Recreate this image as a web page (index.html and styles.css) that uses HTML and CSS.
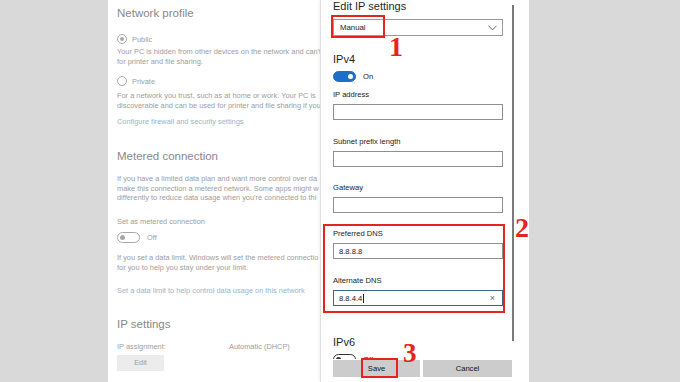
FILE: index.html
```html
<!DOCTYPE html>
<html>
<head>
<meta charset="utf-8">
<link rel="stylesheet" href="styles.css">
</head>
<body>
<div class="page">
  <div class="gutter"></div>
  <main class="panel">
    <section class="settings">
      <h2 class="heading h-network">Network profile</h2>
      <div class="radio-row r-public"><span class="radio checked"></span><span>Public</span></div>
      <p class="para p-public">Your PC is hidden from other devices on the network and can't<br>for printer and file sharing.</p>
      <div class="radio-row r-private"><span class="radio"></span><span>Private</span></div>
      <p class="para p-private">For a network you trust, such as at home or work. Your PC is<br>discoverable and can be used for printer and file sharing if you</p>
      <a class="link l-firewall">Configure firewall and security settings</a>

      <h2 class="heading h-metered">Metered connection</h2>
      <p class="para dense p-metered">If you have a limited data plan and want more control over da<br>make this connection a metered network. Some apps might w<br>differently to reduce data usage when you're connected to thi</p>
      <p class="para p-setas">Set as metered connection</p>
      <div class="toggle-row t-metered"><span class="toggle off"><span class="knob"></span></span><span>Off</span></div>
      <p class="para p-limit">If you set a data limit, Windows will set the metered connectio<br>for you to help you stay under your limit.</p>
      <a class="link l-limit">Set a data limit to help control data usage on this network</a>

      <h2 class="heading h-ip">IP settings</h2>
      <div class="assign-row"><span class="assign-label">IP assignment:</span><span>Automatic (DHCP)</span></div>
      <div class="edit-btn">Edit</div>
    </section>

    <div class="dialog">
      <h1 class="d-title">Edit IP settings</h1>
      <div class="select"><span>Manual</span>
        <svg class="chev" width="9" height="6" viewBox="0 0 9 6"><path d="M0.5 0.8 L4.5 4.8 L8.5 0.8" fill="none" stroke="#555" stroke-width="0.9"/></svg>
      </div>
      <h2 class="d-sub ipv4">IPv4</h2>
      <div class="toggle-row d-toggle"><span class="toggle on"><span class="knob"></span></span><span>On</span></div>
      <label class="d-label l-ip">IP address</label>
      <div class="input"></div>
      <label class="d-label l-subnet">Subnet prefix length</label>
      <div class="input"></div>
      <label class="d-label l-gw">Gateway</label>
      <div class="input"></div>
      <label class="d-label l-pref">Preferred DNS</label>
      <div class="input"><span>8.8.8.8</span></div>
      <label class="d-label l-alt">Alternate DNS</label>
      <div class="input focus"><span>8.8.4.4</span><span class="caret"></span><span class="clear">×</span></div>
      <h2 class="d-sub ipv6">IPv6</h2>
      <div class="toggle-row d-toggle6"><span class="toggle off dark"><span class="knob"></span></span><span class="off6">Off</span></div>
      <div class="scrollbar"></div>
      <div class="footer">
        <div class="btn save">Save</div>
        <div class="btn cancel">Cancel</div>
      </div>
    </div>
  </main>
  <div class="gutter right"></div>
</div>

<div class="mark box1"></div>
<div class="num n1">1</div>
<div class="mark box2"></div>
<div class="num n2">2</div>
<div class="mark box3"></div>
<div class="num n3">3</div>
</body>
</html>
```

FILE: styles.css
```css
* { box-sizing: border-box; margin: 0; padding: 0; }
html, body { width: 680px; height: 382px; overflow: hidden; }
body {
  background: #d9d9d9;
  font-family: "Liberation Sans", Arial, sans-serif;
  position: relative;
}
.page { display: flex; height: 382px; }
.gutter { width: 108px; flex: none; background: #d9d9d9; }
.gutter.right { flex: 1; }
.panel {
  width: 421px; flex: none; background: #fff; position: relative; overflow: hidden;
}

/* ---------- faded settings page ---------- */
.settings {
  padding: 5px 0 0 9px;
  white-space: nowrap;
  color: #9d9d9d;
  font-size: 7.4px;
}
.heading {
  font-weight: normal;
  font-size: 11.5px;
  line-height: 16px;
  color: #888;
}
.para { line-height: 10px; }
.para.dense { line-height: 9.5px; }
.link { display: block; line-height: 10px; color: #95b5cd; }
.radio-row, .toggle-row { display: flex; align-items: center; height: 12px; gap: 5px; }
.radio {
  width: 10px; height: 10px; border-radius: 50%; border: 1px solid #a8a8a8;
  display: flex; align-items: center; justify-content: center;
}
.radio.checked::after {
  content: ""; width: 4px; height: 4px; border-radius: 50%; background: #a8a8a8;
}
.r-public { margin-top: 12px; }
.p-public { margin-top: 2px; }
.r-private { margin-top: 8px; }
.p-private { margin-top: 4px; }
.l-firewall { margin-top: 6px; }
.h-metered { margin-top: 21px; }
.p-metered { margin-top: 10px; }
.p-setas { margin-top: 14px; }
.t-metered { margin-top: 5px; gap: 7px; }
.p-limit { margin-top: 9px; }
.l-limit { margin-top: 13px; }
.h-ip { margin-top: 20px; }
.assign-row { display: flex; line-height: 10px; margin-top: 10px; }
.assign-label { width: 112px; }
.edit-btn {
  margin-top: 3px; width: 47px; height: 16px; background: #ececec;
  text-align: center; line-height: 16px;
}

.toggle {
  width: 23px; height: 11px; border-radius: 6px; position: relative; flex: none;
  border: 1px solid #a8a8a8; display: flex; align-items: center; padding: 0 2px;
}
.toggle .knob { width: 5px; height: 5px; border-radius: 50%; background: #a8a8a8; }
.toggle.on { background: #1b6fcb; border-color: #1b6fcb; justify-content: flex-end; }
.toggle.on .knob { background: #fff; }
.toggle.dark { border-color: #333; }
.toggle.dark .knob { background: #333; }

/* ---------- dialog ---------- */
.dialog {
  position: absolute; left: 212px; top: 0; width: 209px; height: 382px;
  background: #fff; border-left: 1px solid #dedede;
  box-shadow: -1px 0 3px rgba(0,0,0,0.06);
  padding: 0 0 0 12px;
  color: #222;
  font-size: 7.6px;
}
.d-title { font-weight: normal; font-size: 11px; line-height: 13px; color: #1f1f1f; width: fit-content; }
.select {
  margin-top: 6px; width: 170px; height: 17px; border: 1px solid #9a9a9a;
  display: flex; align-items: center; justify-content: space-between;
  padding: 0 5px 0 6px; font-size: 7.8px;
}
.d-sub { font-weight: normal; font-size: 11px; line-height: 14px; color: #1f1f1f; width: fit-content; }
.ipv4 { margin-top: 16px; }
.d-toggle { margin-top: 4px; gap: 7px; }
.d-label { display: block; line-height: 10px; width: fit-content; }
.l-ip { margin-top: 8px; }
.l-subnet { margin-top: 17px; }
.l-gw { margin-top: 16px; }
.l-pref { margin-top: 16px; }
.l-alt { margin-top: 17px; }
.input {
  margin-top: 4px; width: 170px; height: 16px; border: 1px solid #8f8f8f;
  display: flex; align-items: center; padding: 0 5px; position: relative;
}
.input.focus { border-color: #3d6680; }
.caret { width: 1px; height: 9px; background: #222; margin-left: 1px; }
.clear { position: absolute; right: 7px; top: 2px; font-size: 9px; color: #666; }
.ipv6 { margin-top: 29px; }
.d-toggle6 { margin-top: 4px; gap: 7px; }
.scrollbar {
  position: absolute; left: 191px; top: 5px; width: 2px; height: 336px; background: #7a7a7a;
}
.footer {
  position: absolute; left: 0; top: 359px; width: 208px; height: 23px;
  background: #fff; padding: 1px 0 0 12px; display: flex; gap: 3px;
}
.btn {
  height: 17px; background: #cccccc; text-align: center; line-height: 17px;
  font-size: 7.6px; color: #111;
}
.save { width: 87px; }
.cancel { width: 89px; }

/* ---------- annotations ---------- */
.mark { position: absolute; border: 2px solid #e3261d; }
.box1 { left: 331px; top: 15px; width: 54px; height: 23px; }
.box2 { left: 323px; top: 224px; width: 182px; height: 89px; }
.box3 { left: 361px; top: 358px; width: 37px; height: 20px; }
.num {
  position: absolute; color: #e3261d; font-family: "Liberation Serif", "Times New Roman", serif;
  font-weight: bold; font-size: 28px; line-height: 20px;
}
.n1 { left: 389px; top: 37px; }
.n2 { left: 515px; top: 218px; }
.n3 { left: 403px; top: 343px; font-size: 27px; }
```
